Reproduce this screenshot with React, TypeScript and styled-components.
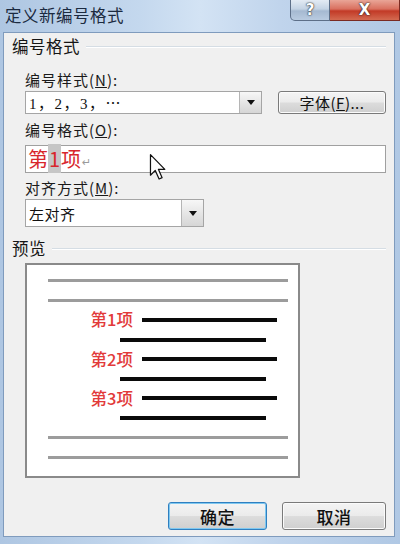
import React from "react";
import styled, { createGlobalStyle } from "styled-components";

const GlobalStyle = createGlobalStyle`
  html, body {
    margin: 0;
    padding: 0;
    background: #b9cfe7;
  }
  body {
    font-family: "Noto Sans CJK SC", "Noto Sans", sans-serif;
  }
`;

const CJK = `"Noto Sans CJK SC", "Noto Sans", sans-serif`;

const Components = {
  Window: styled.div`
    position: relative;
    width: 400px;
    height: 544px;
    display: flex;
    flex-direction: column;
    overflow: hidden;
    background: linear-gradient(90deg, #aec6e2 0%, #c4d8ee 35%, #d3e3f4 50%, #c0d4ec 70%, #b0c8e4 100%);
  `,
  TitleBar: styled.div`
    height: 32px;
    flex: none;
    display: flex;
    align-items: flex-start;
    padding-left: 5px;
  `,
  Title: styled.div`
    font-family: ${CJK};
    font-size: 16.5px;
    line-height: 30px;
    color: #1b2a40;
    letter-spacing: 0.5px;
  `,
  Controls: styled.div`
    margin-left: auto;
    display: flex;
    height: 21px;
  `,
  Control: styled.div<{ $close?: boolean }>`
    width: ${(p) => (p.$close ? "70px" : "40px")};
    height: 21px;
    box-sizing: border-box;
    display: flex;
    align-items: center;
    justify-content: center;
    border: 1px solid ${(p) => (p.$close ? "#7a2a22" : "#5d6f88")};
    border-top: none;
    border-left: ${(p) => (p.$close ? "none" : "1px solid #5d6f88")};
    border-radius: ${(p) => (p.$close ? "0" : "0 0 0 5px")};
    background: ${(p) =>
      p.$close
        ? "linear-gradient(180deg, #e9a597 0%, #d9705f 45%, #c23a27 55%, #d36a50 100%)"
        : "linear-gradient(180deg, #e3ebf4 0%, #c4d3e4 45%, #a5b9d1 55%, #b9cbe0 100%)"};
    color: #fff;
    font-family: "DejaVu Sans", sans-serif;
    font-weight: bold;
    font-size: 15px;
    text-shadow: 0 0 2px #222, 0 0 1px #222;
  `,
  Body: styled.div`
    flex: 1;
    display: flex;
    padding: 0 5px 0 3px;
  `,
  Client: styled.div`
    flex: 1;
    display: flex;
    flex-direction: column;
    background: #f0f0f0;
    border: 1px solid #7f9bbd;
    padding: 3px 8px 0 8px;
  `,
  BottomFrame: styled.div`
    height: 7px;
    flex: none;
  `,
  SectionHeader: styled.div<{ $mt?: number }>`
    display: flex;
    align-items: center;
    height: 20px;
    margin-top: ${(p) => p.$mt ?? 0}px;
    font-family: ${CJK};
    font-size: 16.5px;
    letter-spacing: 0.5px;
    color: #151515;
    gap: 6px;
  `,
  Rule: styled.div`
    flex: 1;
    height: 0;
    border-top: 1px solid #d5dde4;
    border-bottom: 1px solid #ffffff;
    margin-top: 2px;
  `,
  Label: styled.div<{ $mt: number }>`
    height: 18px;
    line-height: 18px;
    margin-top: ${(p) => p.$mt}px;
    margin-left: 13px;
    font-family: ${CJK};
    font-size: 15px;
    color: #1a1a1a;
    letter-spacing: 1px;
    white-space: nowrap;
  `,
  Row: styled.div<{ $mt: number }>`
    display: flex;
    justify-content: space-between;
    margin-top: ${(p) => p.$mt}px;
    margin-left: 13px;
  `,
  Combo: styled.div<{ $w: number; $h: number }>`
    width: ${(p) => p.$w}px;
    height: ${(p) => p.$h}px;
    box-sizing: border-box;
    display: flex;
    background: #fff;
    border: 1px solid #a5a5a5;
  `,
  ComboValue: styled.div<{ $serif?: boolean }>`
    flex: 1;
    display: flex;
    align-items: center;
    padding-left: 3px;
    font-family: ${(p) => (p.$serif ? `"Liberation Serif", "Noto Sans CJK SC", serif` : CJK)};
    font-size: 15px;
    letter-spacing: ${(p) => (p.$serif ? "1.5px" : "0.5px")};
    color: #111;
    white-space: pre;
  `,
  DropButton: styled.div`
    width: 21px;
    display: flex;
    align-items: center;
    justify-content: center;
    border-left: 1px solid #b5b5b5;
    background: linear-gradient(180deg, #f7f7f7 0%, #e6e6e6 50%, #d6d6d6 100%);
  `,
  Arrow: styled.div`
    width: 0;
    height: 0;
    border-left: 4px solid transparent;
    border-right: 4px solid transparent;
    border-top: 5px solid #111;
  `,
  PushButton: styled.div<{ $w: number; $h: number; $focus?: boolean; $big?: boolean }>`
    width: ${(p) => p.$w}px;
    height: ${(p) => p.$h}px;
    box-sizing: border-box;
    display: flex;
    align-items: center;
    justify-content: center;
    border: 1px solid ${(p) => (p.$focus ? "#2f7fc0" : "#7a7a7a")};
    box-shadow: ${(p) => (p.$focus ? "inset 0 0 0 1px #7fc8f0" : "inset 0 0 0 1px #fbfbfb")};
    border-radius: 3px;
    background: linear-gradient(180deg, #f4f4f4 0%, #ebebeb 48%, #dcdcdc 52%, #cfcfcf 100%);
    font-family: ${CJK};
    font-size: ${(p) => (p.$big ? "17px" : "15px")};
    font-weight: ${(p) => (p.$big ? 500 : 400)};
    color: #111;
    letter-spacing: 0.5px;
  `,
  TextField: styled.div`
    position: relative;
    height: 28px;
    margin-top: 6px;
    margin-left: 13px;
    box-sizing: border-box;
    display: flex;
    align-items: center;
    background: #fff;
    border: 1px solid #a0a0a0;
    padding-left: 2px;
  `,
  FieldText: styled.span`
    font-family: ${CJK};
    font-size: 20px;
    line-height: 26px;
    color: #d8262c;
  `,
  Highlight: styled.span`
    background: #c6c6c6;
    color: #d8262c;
    padding: 0 1px;
  `,
  Pilcrow: styled.span`
    font-family: "DejaVu Sans", sans-serif;
    font-size: 11px;
    color: #9a9a9a;
    margin-left: 1px;
    margin-top: 6px;
  `,
  Cursor: styled.svg`
    position: absolute;
    left: 123px;
    top: 8px;
  `,
  Preview: styled.div`
    width: 275px;
    height: 215px;
    margin-top: 5px;
    margin-left: 13px;
    box-sizing: border-box;
    background: #fff;
    border: 2px solid #8a8a8a;
    display: flex;
    flex-direction: column;
    padding-top: 6px;
  `,
  PreviewRow: styled.div`
    height: 19.6px;
    display: flex;
    align-items: center;
    flex: none;
  `,
  Bar: styled.div<{ $left: number; $width: number; $gray?: boolean }>`
    margin-left: ${(p) => p.$left}px;
    width: ${(p) => p.$width}px;
    height: ${(p) => (p.$gray ? 3 : 4)}px;
    background: ${(p) => (p.$gray ? "#9c9c9c" : "#0a0a0a")};
  `,
  ItemLabel: styled.div`
    width: 106px;
    text-align: right;
    font-family: ${CJK};
    font-size: 16.5px;
    font-weight: 500;
    color: #e23a3a;
    line-height: 19px;
  `,
  Buttons: styled.div`
    display: flex;
    justify-content: flex-end;
    gap: 15px;
    margin-top: 24px;
  `,
};

const Grey = ({ left = 21, width = 240 }: { left?: number; width?: number }) => (
  <Components.PreviewRow>
    <Components.Bar $gray $left={left} $width={width} />
  </Components.PreviewRow>
);

const Item = ({ n }: { n: number }) => (
  <>
    <Components.PreviewRow>
      <Components.ItemLabel>第{n}项</Components.ItemLabel>
      <Components.Bar $left={9} $width={135} />
    </Components.PreviewRow>
    <Components.PreviewRow>
      <Components.Bar $left={93} $width={146} />
    </Components.PreviewRow>
  </>
);

export default function App() {
  return (
    <>
      <GlobalStyle />
      <Components.Window>
        <Components.TitleBar>
          <Components.Title>定义新编号格式</Components.Title>
          <Components.Controls>
            <Components.Control>?</Components.Control>
            <Components.Control $close>X</Components.Control>
          </Components.Controls>
        </Components.TitleBar>
        <Components.Body>
          <Components.Client>
            <Components.SectionHeader>
              编号格式
              <Components.Rule />
            </Components.SectionHeader>
            <Components.Label $mt={15}>
              编号样式(<u>N</u>):
            </Components.Label>
            <Components.Row $mt={2}>
              <Components.Combo $w={237} $h={23}>
                <Components.ComboValue $serif>1，2，3，⋯</Components.ComboValue>
                <Components.DropButton>
                  <Components.Arrow />
                </Components.DropButton>
              </Components.Combo>
              <Components.PushButton $w={108} $h={23}>
                字体(<u>F</u>)...
              </Components.PushButton>
            </Components.Row>
            <Components.Label $mt={7}>
              编号格式(<u>O</u>):
            </Components.Label>
            <Components.TextField>
              <Components.FieldText>
                第<Components.Highlight>1</Components.Highlight>项
              </Components.FieldText>
              <Components.Pilcrow>↵</Components.Pilcrow>
              <Components.Cursor width="18" height="26" viewBox="0 0 12 19">
                <path
                  d="M0.5 0.5 L0.5 15.5 L4 12 L6.8 18.3 L9 17.3 L6.3 11.2 L11 11.2 Z"
                  fill="#fff"
                  stroke="#111"
                  strokeWidth="0.9"
                  strokeLinejoin="round"
                />
              </Components.Cursor>
            </Components.TextField>
            <Components.Label $mt={6}>
              对齐方式(<u>M</u>):
            </Components.Label>
            <Components.Row $mt={2}>
              <Components.Combo $w={179} $h={28}>
                <Components.ComboValue>左对齐</Components.ComboValue>
                <Components.DropButton>
                  <Components.Arrow />
                </Components.DropButton>
              </Components.Combo>
            </Components.Row>
            <Components.SectionHeader $mt={11}>
              预览
              <Components.Rule />
            </Components.SectionHeader>
            <Components.Preview>
              <Grey />
              <Grey />
              <Item n={1} />
              <Item n={2} />
              <Item n={3} />
              <Grey />
              <Grey />
            </Components.Preview>
            <Components.Buttons>
              <Components.PushButton $w={99} $h={28} $focus $big>
                确定
              </Components.PushButton>
              <Components.PushButton $w={104} $h={28} $big>
                取消
              </Components.PushButton>
            </Components.Buttons>
          </Components.Client>
        </Components.Body>
        <Components.BottomFrame />
      </Components.Window>
    </>
  );
}
